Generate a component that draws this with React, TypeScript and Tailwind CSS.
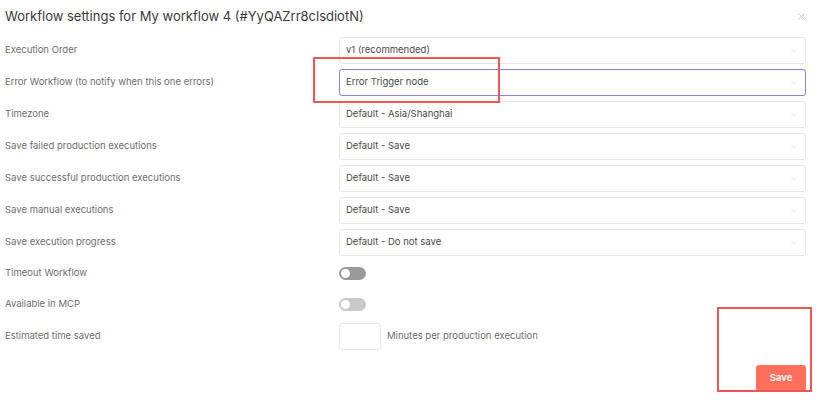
import { ChevronDown, X } from "lucide-react";

type SelectRow = { label: string; value: string; focused?: boolean };

const selectRows: SelectRow[] = [
  { label: "Execution Order", value: "v1 (recommended)" },
  { label: "Error Workflow (to notify when this one errors)", value: "Error Trigger node", focused: true },
  { label: "Timezone", value: "Default - Asia/Shanghai" },
  { label: "Save failed production executions", value: "Default - Save" },
  { label: "Save successful production executions", value: "Default - Save" },
  { label: "Save manual executions", value: "Default - Save" },
  { label: "Save execution progress", value: "Default - Do not save" },
];

function Toggle({ dark }: { dark?: boolean }) {
  return (
    <div
      className={
        "relative h-[13px] w-[27px] rounded-full " + (dark ? "bg-[#9a9a9a]" : "bg-[#c9c9c9]")
      }
    >
      <div className="absolute left-[2px] top-[2px] h-[9px] w-[9px] rounded-full bg-white" />
    </div>
  );
}

export default function App() {
  return (
    <div
      className="relative h-[406px] w-[817px] overflow-hidden bg-white text-[#555]"
      style={{ fontFamily: "Inter, 'Noto Sans', sans-serif" }}
    >
      <div className="flex items-center justify-between pl-[5px] pr-[10px] pt-[7px]">
        <h1 className="text-[13px] leading-[18px] text-[#3a3a3a]">
          Workflow settings for My workflow 4 (#YyQAZrr8clsdiotN)
        </h1>
        <X className="h-[11px] w-[11px] text-[#aaa]" strokeWidth={1.5} />
      </div>

      <div className="mt-[12px] flex flex-col gap-[5px] pl-[5px] pr-[11px]">
        {selectRows.map((row) => (
          <div key={row.label} className="grid grid-cols-[334px_1fr] items-center">
            <span className="text-[9.5px] text-[#6e6e6e]">{row.label}</span>
            <div
              className={
                "flex h-[27px] items-center justify-between rounded-[3px] border bg-white pl-[6px] pr-[6px] " +
                (row.focused ? "border-[#8c80e0]" : "border-[#e6e6e6]")
              }
            >
              <span className="text-[9.5px] text-[#4a4a4a]">{row.value}</span>
              <ChevronDown className="h-[10px] w-[10px] text-[#c4c4c4]" strokeWidth={1.2} />
            </div>
          </div>
        ))}

        <div className="grid h-[25px] grid-cols-[334px_1fr] items-center">
          <span className="text-[9.5px] text-[#6e6e6e]">Timeout Workflow</span>
          <Toggle dark />
        </div>
        <div className="grid h-[27px] grid-cols-[334px_1fr] items-center">
          <span className="text-[9.5px] text-[#6e6e6e]">Available in MCP</span>
          <Toggle />
        </div>
        <div className="grid grid-cols-[334px_1fr] items-center">
          <span className="text-[9.5px] text-[#6e6e6e]">Estimated time saved</span>
          <div className="flex items-center gap-[6px]">
            <div className="h-[27px] w-[42px] rounded-[3px] border border-[#e6e6e6] bg-white" />
            <span className="text-[9.5px] text-[#6e6e6e]">Minutes per production execution</span>
          </div>
        </div>

        <div className="mt-[10px] flex justify-end">
          <button className="h-[26px] w-[50px] rounded-[3px] bg-[#ff6f5c] text-[9.5px] font-semibold text-white">
            Save
          </button>
        </div>
      </div>

      {/* highlight frames drawn over the form */}
      <div className="pointer-events-none absolute left-[313px] top-[57px] h-[46px] w-[187px] border-2 border-[#f25555]" />
      <div className="pointer-events-none absolute left-[717px] top-[307px] h-[85px] w-[95px] border-2 border-[#f25555]" />
    </div>
  );
}
